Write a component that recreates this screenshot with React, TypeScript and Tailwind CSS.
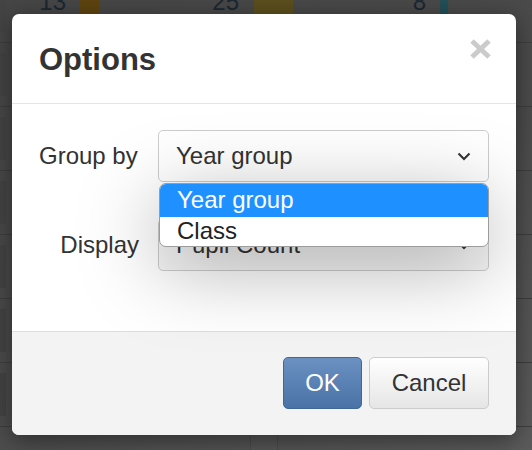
import React from "react"

const rows = [0, 1, 2, 3, 4, 5, 6]

function BackgroundTable() {
  return (
    <div className="mt-[-21px] flex flex-col">
      {rows.map((r) => (
        <div key={r} className="relative flex h-[64px] border-b border-[#3e3e3e]">
          <div className="w-[6px] my-[10px] bg-[#444]" />
          {r === 0 && (
            <div className="flex items-start pt-[11px] text-[24px] leading-[24px] text-[#1b2733]">
              <span className="w-[60px] text-right">13</span>
              <span className="ml-[14px] h-[60px] w-[20px] mt-[-11px] bg-[#5f4410]" />
              <span className="w-[139px] text-right">25</span>
              <span className="ml-[15px] h-[60px] w-[39px] mt-[-11px] bg-[#5c4f1e]" />
              <span className="w-[133px] text-right">8</span>
              <span className="ml-[14px] h-[60px] w-[8px] mt-[-11px] bg-[#22505a]" />
            </div>
          )}
        </div>
      ))}
    </div>
  )
}

function Chevron() {
  return (
    <svg width="14" height="9" viewBox="0 0 14 9" className="shrink-0">
      <polyline points="1.5,1.5 7,7 12.5,1.5" fill="none" stroke="#333" strokeWidth="2" />
    </svg>
  )
}

export default function App() {
  return (
    <div className="relative h-[450px] w-[532px] overflow-hidden bg-[linear-gradient(150deg,#464646_0%,#4c4c4c_55%,#5b5b5b_100%)] font-['Liberation_Sans',Arial,sans-serif]">
      <BackgroundTable />
      <div className="absolute left-[250px] top-[433px] h-[17px] w-[28px] bg-[#555] border-x border-[#4a4a4a]" />

      {/* modal */}
      <div className="absolute left-[12px] top-[14px] flex h-[421px] w-[504px] flex-col overflow-hidden rounded-[7px] bg-white shadow-[0_5px_25px_rgba(0,0,0,0.45)]">
        <div className="flex h-[90px] shrink-0 items-start justify-between border-b border-[#e5e5e5] pl-[27px] pr-[24px] pt-[28px]">
          <h2 className="text-[31px] font-bold leading-[36px] text-[#333]">Options</h2>
          <svg width="23" height="22" viewBox="0 0 23 22" className="mt-[-4px]">
            <line x1="3" y1="3" x2="20" y2="19" stroke="#cbcbcb" strokeWidth="5" />
            <line x1="20" y1="3" x2="3" y2="19" stroke="#cbcbcb" strokeWidth="5" />
          </svg>
        </div>

        <div className="flex flex-1 flex-col gap-[37px] px-[27px] pt-[26px]">
          <div className="relative z-10 flex items-center">
            <label className="w-[100px] text-left text-[24px] leading-[28px] text-[#333]">Group by</label>
            <div className="ml-[19px] flex h-[52px] flex-1 items-center justify-between rounded-[5px] border border-[#cccccc] bg-white pl-[17px] pr-[17px]">
              <span className="text-[24px] leading-[28px] text-[#333]">Year group</span>
              <Chevron />
            </div>
            <div className="absolute left-[120px] top-[53px] w-[330px] overflow-hidden rounded-[7px] border border-[#9c9c9c] bg-white shadow-[0_18px_80px_rgba(0,0,0,0.34)]">
              <div className="h-[33px] bg-[#1e90ff] pl-[17px] text-[24px] leading-[31px] text-white">Year group</div>
              <div className="h-[29px] pl-[17px] text-[24px] leading-[27px] text-[#222]">Class</div>
            </div>
          </div>

          <div className="flex items-center">
            <label className="w-[100px] text-right text-[24px] leading-[28px] text-[#333]">Display</label>
            <div className="ml-[19px] flex h-[52px] flex-1 items-center justify-between rounded-[5px] border border-[#cccccc] bg-[#f7f7f7] pl-[17px] pr-[17px]">
              <span className="text-[24px] leading-[28px] text-[#333]">Pupil Count</span>
              <Chevron />
            </div>
          </div>
        </div>

        <div className="flex h-[104px] shrink-0 items-start justify-end gap-[7px] border-t border-[#dddddd] bg-[#f3f3f3] pr-[27px] pt-[25px]">
          <button className="h-[52px] w-[79px] rounded-[5px] border border-[#3f679a] bg-[linear-gradient(#6b91c2,#4a72a6)] text-[24px] text-white">
            OK
          </button>
          <button className="h-[52px] w-[120px] rounded-[5px] border border-[#cccccc] bg-[linear-gradient(#ffffff,#e6e6e6)] text-[24px] text-[#333]">
            Cancel
          </button>
        </div>
      </div>
    </div>
  )
}
